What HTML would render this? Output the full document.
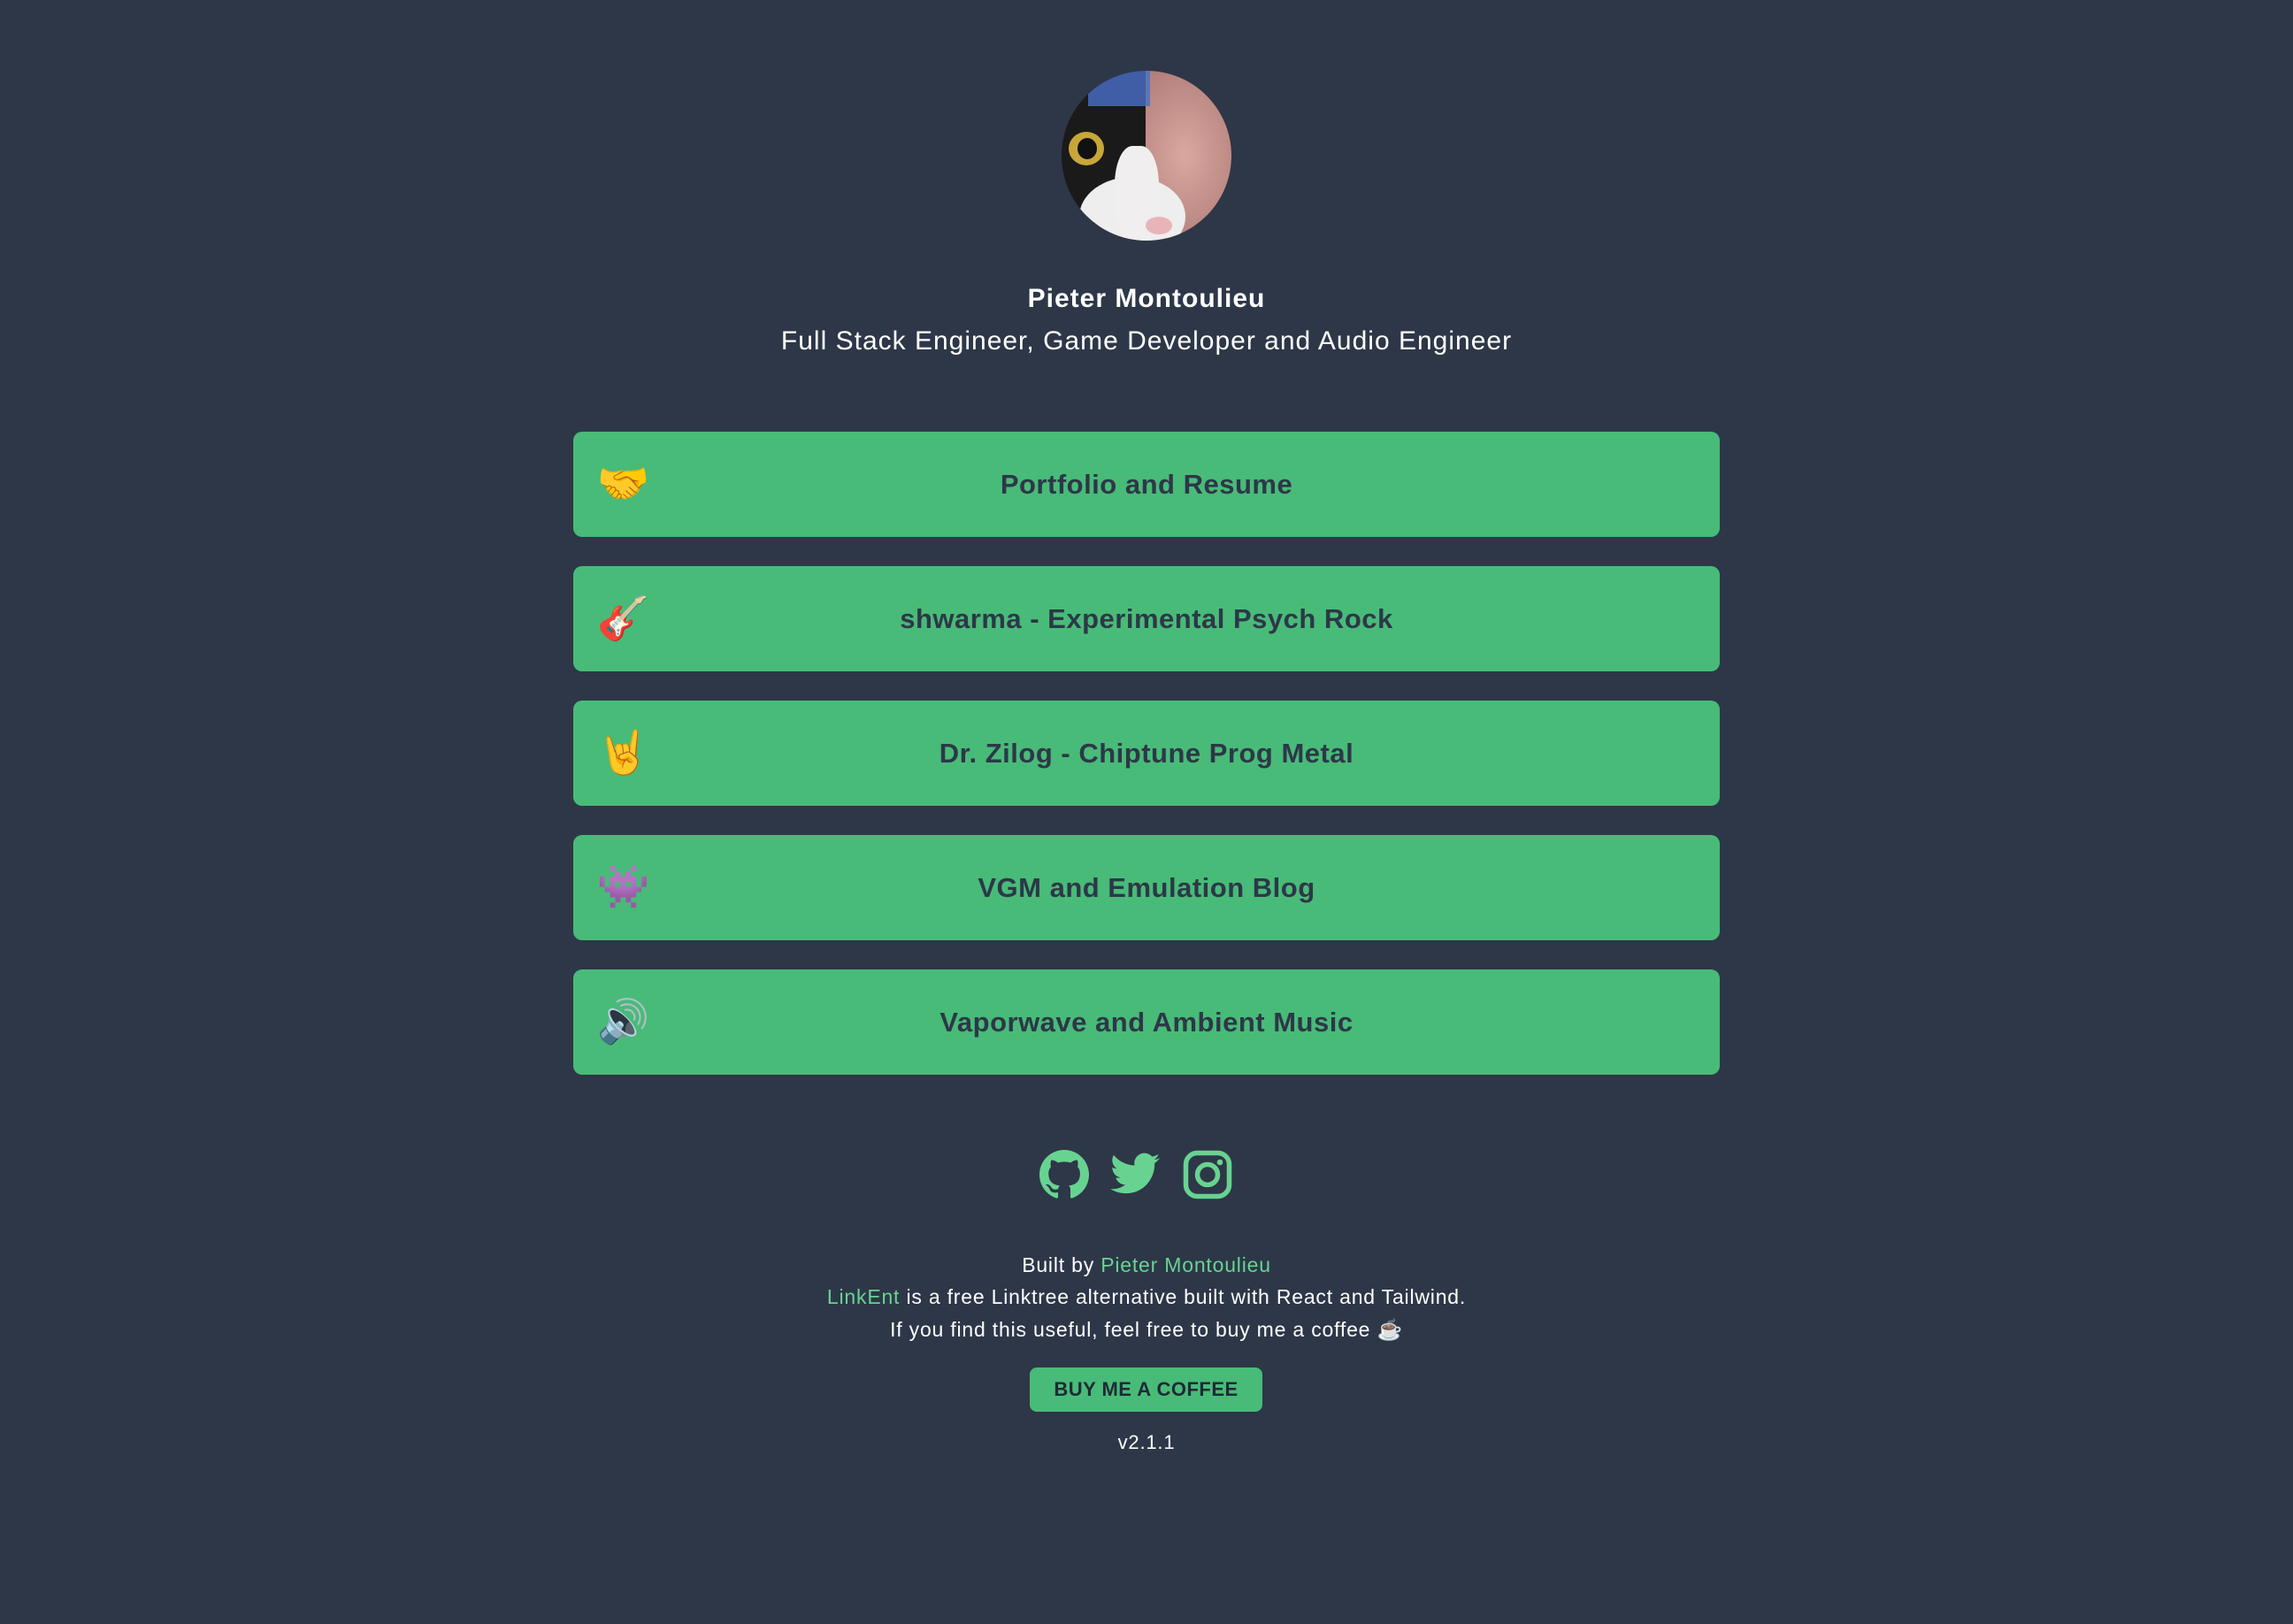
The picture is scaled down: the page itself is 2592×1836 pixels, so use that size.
<!DOCTYPE html>
<html><head><meta charset="utf-8"><style>
html,body{margin:0;padding:0;width:2592px;height:1836px;background:#2d3748;overflow:hidden;font-family:"Liberation Sans",sans-serif;color:#fff}
.a{position:absolute}
.c{position:absolute;left:0;width:2592px;text-align:center}
.btn{position:absolute;left:648px;width:1296px;height:119px;background:#48bb78;border-radius:10px;color:#2d3748;font-weight:bold;font-size:31px;line-height:119px;text-align:center;letter-spacing:0.5px}
.btn span{position:absolute;left:25px;top:0;width:64px;text-align:center;font-size:48px;line-height:119px}
.f{font-size:23px;color:#fff;letter-spacing:0.8px}
.g{color:#68d391}
</style></head><body>
<div class="a" style="left:1200px;top:80px;width:192px;height:192px;border-radius:50%;overflow:hidden;background:#1a1a1a">
 <div class="a" style="left:95px;top:0;width:110px;height:192px;background:radial-gradient(ellipse at 40% 50%,#d9a8a0,#a87470)"></div>
 <div class="a" style="left:30px;top:0;width:70px;height:40px;background:#4a6fc8;opacity:.8"></div>
 <div class="a" style="left:20px;top:120px;width:120px;height:90px;border-radius:50%;background:#eee"></div>
 <div class="a" style="left:60px;top:85px;width:50px;height:110px;background:#f0eeee;border-radius:40%"></div>
 <div class="a" style="left:8px;top:69px;width:40px;height:38px;border-radius:50%;background:#c9a63a"></div>
 <div class="a" style="left:18px;top:76px;width:22px;height:24px;border-radius:50%;background:#111"></div>
 <div class="a" style="left:95px;top:165px;width:30px;height:20px;border-radius:50%;background:#e8b4b8"></div>
</div>
<div class="c" style="top:321px;font-size:30px;font-weight:bold;letter-spacing:1px">Pieter Montoulieu</div>
<div class="c" style="top:369px;font-size:30px;letter-spacing:1px">Full Stack Engineer, Game Developer and Audio Engineer</div>
<div class="btn" style="top:488px"><span>🤝</span>Portfolio and Resume</div>
<div class="btn" style="top:640px"><span>🎸</span>shwarma - Experimental Psych Rock</div>
<div class="btn" style="top:792px"><span>🤘</span>Dr. Zilog - Chiptune Prog Metal</div>
<div class="btn" style="top:944px"><span>👾</span>VGM and Emulation Blog</div>
<div class="btn" style="top:1096px"><span>🔊</span>Vaporwave and Ambient Music</div>
<svg class="a" style="left:1175px;top:1300px" width="56" height="56" viewBox="0 0 16 16"><path fill="#68d391" d="M8 0C3.58 0 0 3.58 0 8c0 3.54 2.29 6.530 5.47 7.59.4.07.55-.17.55-.38 0-.19-.01-.82-.01-1.49-2.01.37-2.53-.49-2.69-.94-.09-.23-.48-.94-.82-1.130-.28-.15-.68-.52-.01-.53.63-.01 1.08.58 1.23.82.72 1.21 1.87.87 2.33.66.07-.52.28-.87.51-1.07-1.78-.2-3.64-.89-3.64-3.95 0-.87.31-1.59.82-2.15-.08-.2-.36-1.02.08-2.12 0 0 .67-.21 2.2.82.64-.18 1.32-.27 2-.27.68 0 1.36.09 2 .27 1.53-1.04 2.2-.82 2.2-.82.44 1.1.16 1.92.08 2.12.51.56.82 1.27.82 2.15 0 3.07-1.87 3.75-3.65 3.95.29.25.54.73.54 1.48 0 1.07-.01 1.93-.01 2.2 0 .21.15.46.55.38A8.013 8.013 0 0 0 16 8c0-4.42-3.58-8-8-8z"/></svg>
<svg class="a" style="left:1255px;top:1302px" width="56" height="50" viewBox="0 0 24 20"><path fill="#68d391" d="M24 2.4c-.9.4-1.8.7-2.8.8 1-.6 1.8-1.6 2.2-2.7-1 .6-2 1-3.1 1.2C19.3.7 18 0 16.6 0c-2.7 0-4.9 2.2-4.9 4.9 0 .4 0 .8.1 1.1C7.7 5.8 4.1 3.9 1.7.9c-.4.7-.7 1.6-.7 2.5 0 1.7.9 3.2 2.2 4.1-.8 0-1.6-.2-2.2-.6v.1c0 2.4 1.7 4.4 3.9 4.8-.4.1-.8.2-1.3.2-.3 0-.6 0-.9-.1.6 2 2.4 3.4 4.6 3.4-1.7 1.3-3.8 2.1-6.1 2.1-.4 0-.8 0-1.2-.1 2.2 1.4 4.8 2.2 7.5 2.2 9.1 0 14-7.5 14-14v-.6c1-.7 1.8-1.6 2.5-2.5z"/></svg>
<svg class="a" style="left:1337px;top:1300px" width="56" height="56" viewBox="0 0 56 56"><rect x="3.5" y="3.5" width="49" height="49" rx="13" fill="none" stroke="#68d391" stroke-width="5.5"/><circle cx="28" cy="28" r="11.5" fill="none" stroke="#68d391" stroke-width="5.5"/><circle cx="42" cy="14" r="3.3" fill="#68d391"/></svg>
<div class="c f" style="top:1417px">Built by <span class="g">Pieter Montoulieu</span></div>
<div class="c f" style="top:1453px"><span class="g">LinkEnt</span> is a free Linktree alternative built with React and Tailwind.</div>
<div class="c f" style="top:1490px">If you find this useful, feel free to buy me a coffee ☕</div>
<div class="a" style="left:1164px;top:1546px;width:263px;height:50px;background:#48bb78;border-radius:8px;color:#1f2937;font-weight:bold;font-size:22px;line-height:50px;text-align:center;letter-spacing:0.5px">BUY ME A COFFEE</div>
<div class="c f" style="top:1618px;font-size:22px">v2.1.1</div>
</body></html>
